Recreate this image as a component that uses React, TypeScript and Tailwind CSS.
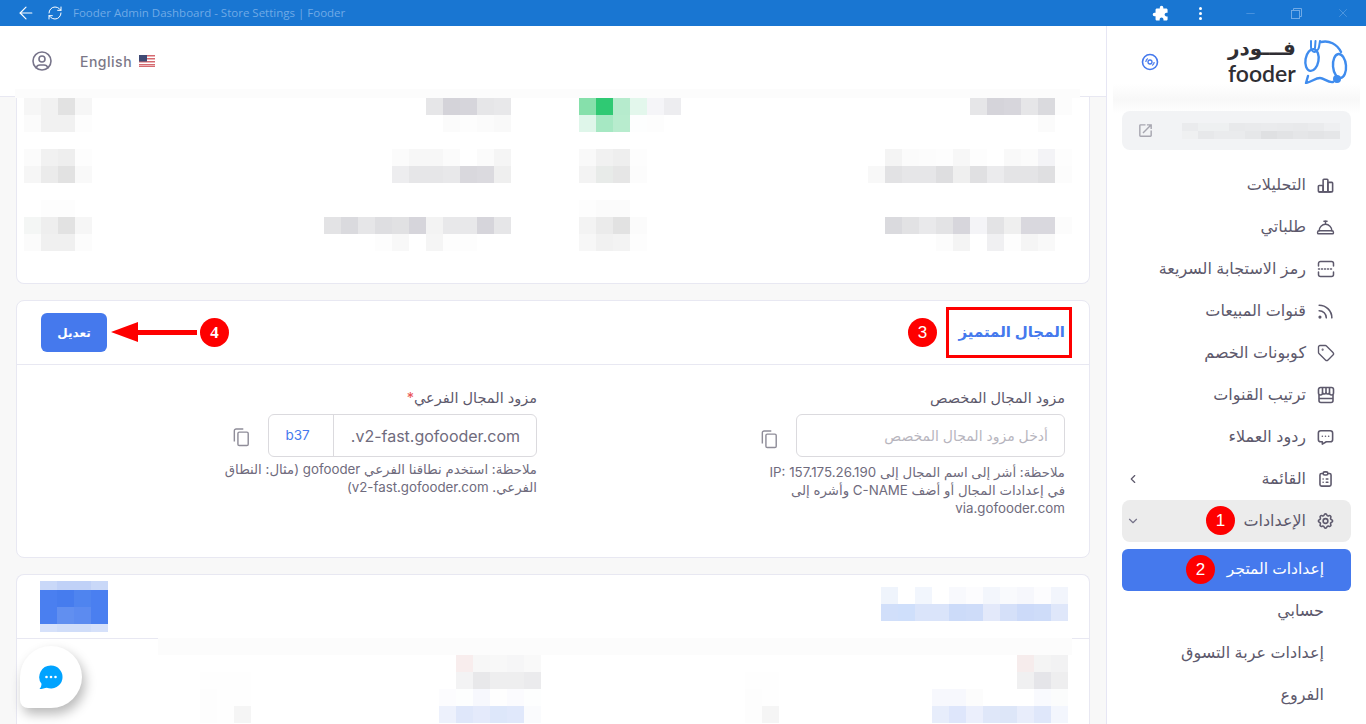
import { ArrowLeft, ConciergeBell, RefreshCw, Tag, X, Minus, ChevronLeft, ChevronDown } from "lucide-react";
import { MdExtension, MdOutlineOpenInNew } from "react-icons/md";
import { TbChartBar, TbClipboardList, TbMessageDots, TbRss, TbSettings, TbUserCircle } from "react-icons/tb";

type Cell = string | null;

// pixelated (redacted) blocks from the screenshot
function Mosaic({ rows, heights, cell = 17 }: { rows: Cell[][]; heights?: number[]; cell?: number }) {
  return (
    <div className="flex flex-col shrink-0">
      {rows.map((row, i) => (
        <div key={i} className="flex" style={{ height: heights ? heights[i] : 17 }}>
          {row.map((c, j) => (
            <div key={j} className="h-full" style={{ width: cell, backgroundColor: c ?? "transparent" }} />
          ))}
        </div>
      ))}
    </div>
  );
}

function Badge({ n, className }: { n: number; className: string }) {
  return (
    <div
      className={`absolute w-[29px] h-[29px] rounded-full bg-[#fe0000] text-white flex items-center justify-center text-[17px] font-['Liberation_Sans',sans-serif] ${className}`}
    >
      {n}
    </div>
  );
}

function QrIcon() {
  return (
    <svg width="18" height="18" viewBox="0 0 18 18" fill="none" stroke="currentColor" strokeWidth="1.5" strokeLinecap="round">
      <path d="M1.5 6V3.5a2 2 0 0 1 2-2h11a2 2 0 0 1 2 2V6" />
      <path d="M1.5 12v2.5a2 2 0 0 0 2 2h11a2 2 0 0 0 2-2V12" />
      <path d="M1.5 9h15" strokeDasharray="1 2" />
    </svg>
  );
}

function StoreIcon() {
  return (
    <svg width="18" height="18" viewBox="0 0 18 18" fill="none" stroke="currentColor" strokeWidth="1.6" strokeLinejoin="round">
      <path d="M3.5 1.5h11a2 2 0 0 1 2 2V7a2 2 0 0 1-4 0 2 2 0 0 1-3.500 0 2 2 0 0 1-3.500 0 2 2 0 0 1-4 0V3.500a2 2 0 0 1 2-2z" />
      <path d="M5.500 1.500V7M9 1.500V7M12.500 1.500V7" />
      <path d="M2 9v5.500a2 2 0 0 0 2 2h10a2 2 0 0 0 2-2V9M2 12.500h14" />
    </svg>
  );
}

function CopyIcon() {
  return (
    <svg width="17" height="19" viewBox="0 0 19 21" fill="none" stroke="#8f8d99" strokeWidth="1.6">
      <rect x="5.500" y="4.500" width="11.500" height="15" rx="1.500" />
      <path d="M1.500 15V3a2 2 0 0 1 2-2h8" />
    </svg>
  );
}

function UsFlag() {
  return (
    <svg width="16" height="12" viewBox="0 0 16 12">
      <rect width="16" height="12" fill="#fff" />
      <path d="M0 0h16v1.500H0zM0 3h16v1.500H0zM0 6h16v1.500H0zM0 9h16v1.500H0zM0 11h16v1H0z" fill="#d66a70" />
      <rect width="8" height="6.500" fill="#3f4a75" />
    </svg>
  );
}

function FooderLogo() {
  return (
    <svg width="46" height="48" viewBox="0 0 46 48" fill="none" stroke="#3f8cee" strokeWidth="2.400" strokeLinecap="round">
      <ellipse cx="9" cy="20" rx="6.500" ry="11" transform="rotate(10 9 20)" />
      <ellipse cx="36.500" cy="26" rx="6.500" ry="12" transform="rotate(-5 36.500 26)" />
      <path d="M8 1v6c0 3 2 5 3.500 5s4-2 4.500-5l1-6M12.500 1l-.5 7" strokeWidth="2" />
      <path d="M18 2c8-2 16 2 20 10" />
      <path d="M3 43l2-7M3 43c6-1 9-5 14-5 4 0 8 5 13 4" />
      <circle cx="34" cy="39" r="4" fill="#3f8cee" stroke="none" />
    </svg>
  );
}

const navItems = [
  { label: "التحليلات", icon: <TbChartBar size={19} /> },
  { label: "طلباتي", icon: <ConciergeBell size={19} strokeWidth={1.8} /> },
  { label: "رمز الاستجابة السريعة", icon: <QrIcon /> },
  { label: "قنوات المبيعات", icon: <TbRss size={19} /> },
  { label: "كوبونات الخصم", icon: <Tag size={18} strokeWidth={1.8} /> },
  { label: "ترتيب القنوات", icon: <StoreIcon /> },
  { label: "ردود العملاء", icon: <TbMessageDots size={20} /> },
];

const chatRow1 = [
  ["#f6f6f6", "#f1f1f1", "#e2e2e2", "#f6f6f6"],
  ["#fbfbfb", "#f1f1f1", "#f1f1f1", "#fdfdfd"],
];

function FieldNote({ children, className }: { children: React.ReactNode; className: string }) {
  return <p className={`text-[13.300px] leading-[18px] text-[#6f6b7d] ${className}`}>{children}</p>;
}

function NavLabel({ children }: { children: React.ReactNode }) {
  return <span className="-translate-y-px">{children}</span>;
}

export default function App() {
  return (
    <div className="w-[1366px] h-[724px] overflow-hidden flex flex-col bg-white [font-family:Inter,'DejaVu_Sans',sans-serif]">
      {/* window title bar */}
      <div className="h-[26px] shrink-0 bg-[#1976d2] flex items-center text-white">
        <ArrowLeft size={20} strokeWidth={1.4} className="ml-[16px]" />
        <RefreshCw size={16} strokeWidth={1.5} className="ml-[11px]" />
        <span className="ml-[10px] text-[11.500px] text-[#70aae6] font-['Open_Sans',sans-serif]">
          Fooder Admin Dashboard - Store Settings | Fooder
        </span>
        <MdExtension size={17} className="ml-auto -scale-x-100" />
        <div className="ml-[30px] flex flex-col gap-[2px]">
          <span className="w-[3px] h-[3px] rounded-full bg-white" />
          <span className="w-[3px] h-[3px] rounded-full bg-white" />
          <span className="w-[3px] h-[3px] rounded-full bg-white" />
        </div>
        <Minus size={13} strokeWidth={1} className="ml-[42px] text-[#70aae6]" />
        <svg width="11" height="11" viewBox="0 0 11 11" fill="none" stroke="#70aae6" className="ml-[34px]">
          <rect x="0.500" y="2.500" width="8" height="8" />
          <path d="M2.500 2.500V.5h8v8H8.500" />
        </svg>
        <X size={14} strokeWidth={1} className="ml-[34px] mr-[16px] text-[#70aae6]" />
      </div>

      <div className="flex-1 flex min-h-0">
        {/* main column */}
        <div className="relative flex-1 min-w-0 flex flex-col bg-[#f8f8f8] overflow-hidden">
          <header className="h-[71px] shrink-0 bg-white border-b border-[#e8e8f2] flex items-center pl-[30px] text-[#7b7888]">
            <TbUserCircle size={24} strokeWidth={1.6} className="text-[#77748a]" />
            <span className="ml-[26px] text-[14px] font-medium tracking-[0.5px]">English</span>
            <span className="ml-[7px]"><UsFlag /></span>
          </header>
          <div className="absolute left-[15px] top-[63px] w-[1065px] h-[9px] bg-[#fcfcfc]" />

          {/* first card, scrolled under the header */}
          <div className="mx-4 shrink-0 h-[187px] bg-white border border-t-0 border-[#e8e8f2] rounded-b-lg pl-[7px] pt-px grid grid-cols-[68px_419px_357px_204px] grid-rows-[51px_51px_51px] items-start">
            <Mosaic rows={chatRow1} />
            <div className="flex justify-end">
              <Mosaic rows={[["#e6e6e8", "#d4d3d9", "#d6d5db", "#e6e6e8", "#e8e8ea"], [null, "#fbfbfb", "#fdfdfd", "#fbfbfb", "#f9f9f9"]]} />
            </div>
            <div className="pl-[68px]">
              <Mosaic rows={[["#86e0ab", "#2fc973", "#b6ebcd", "#e3f7ec", "#f5f5f8", "#ededf0"], ["#dff6ea", "#a6e8c3", "#b8ecce", "#fdfefe", "#fdfdfd", null]]} />
            </div>
            <div className="flex justify-end">
              <Mosaic rows={[["#e6e6e8", "#d5d4da", "#d7d6dc", "#e6e6e8", "#dadade", "#fcfcfc"], [null, null, null, null, "#fbfbfb", null]]} />
            </div>

            <Mosaic rows={[["#fbfbfb", "#f1f1f1", "#eeeeee", "#fdfdfd"], ["#f6f6f6", "#ebebeb", "#e2e2e2", "#f9f9f9"]]} />
            <div className="flex justify-end">
              <Mosaic rows={[["#fbfbfb", "#f7f7f7", "#f7f7f7", "#fbfbfb", null, "#fbfbfb", "#f5f5f5"], ["#ededef", "#e6e6e8", "#e6e6e8", "#e8e8ea", "#d9d8dd", "#dbdadf", "#efefef"]]} />
            </div>
            <div className="pl-[68px]">
              <Mosaic rows={[["#f9f9f9", "#f1f1f1", "#eeeeee", "#fdfdfd"], ["#f3f3f3", "#e8ebe9", "#e6e6e6", "#fcfcfc"]]} />
            </div>
            <div className="flex justify-end">
              <Mosaic rows={[[null, "#f4f4f4", "#fbfbfb", "#fcfcfc", "#fdfdfd", "#f7f7f7", "#fdfdfd", null, "#f9f9f9", "#fbfbfb", "#f3f3f6", "#fdfdfd"], ["#f8f8f8", "#e2e2e4", "#e6e6e8", "#e6e6e8", "#dedee0", "#efefef", "#e0e0e2", "#ebebed", "#e4e4e6", "#e4e4e6", "#dfdfe1", "#fcfcfc"]]} />
            </div>

            <Mosaic rows={[[null, "#fdfdfd", "#fdfdfd", null], ["#f4f6f5", "#eeeeee", "#e2e2e2", "#f6f6f6"], ["#fbfbfb", "#f0f0f0", "#f0f0f0", "#fcfcfc"]]} />
            <div className="flex justify-end">
              <Mosaic rows={[[null], ["#e3e3e5", "#dadade", "#e6e6e8", "#dedee1", "#e1e1e3", "#d6d5db", "#f3f3f3", "#e8e8ea", "#e8e8ea", "#d6d5db", "#e6e6e8"], [null, null, null, "#fdfdfd", "#f8f8f8", null, "#f5f5f5", "#fdfdfd", "#fdfdfd", null, null]]} />
            </div>
            <div className="pl-[68px]">
              <Mosaic rows={[["#fdfdfd", "#fbfbfb", "#fbfbfb"], ["#f3f3f3", "#ebebeb", "#e2e2e2", "#fbfbfb"], ["#f7f7f7", "#f1f1f1", "#f3f3f3", "#fdfdfd"]]} />
            </div>
            <div className="flex justify-end">
              <Mosaic rows={[[null], ["#dadade", "#e2e2e4", "#e9e9eb", "#e3e3e5", "#d7d6dc", "#f4f4f7", "#e3e3e5", "#efefef", "#d9d8de", "#d9d8de", "#fcfcfc"], [null, null, null, "#fcfcfc", "#f4f4f4", null, "#f0f0f2", "#fdfdfd", "#f5f5f5", "#f9f9f9", null]]} />
            </div>
          </div>

          {/* premium domain card */}
          <section dir="rtl" className="relative mx-4 mt-4 shrink-0 h-[258px] bg-white border border-[#e8e8f2] rounded-lg">
            <div className="h-[64px] border-b border-[#e8e8f2] flex items-center justify-between pl-[24px] pr-[24px]">
              <h2 className="text-[15px] font-semibold text-[#4579ed]">المجال المتميز</h2>
              <button className="w-[66px] h-[39px] rounded-md bg-[#4579ed] text-white text-[12px] font-semibold">تعديل</button>
            </div>
            <div className="grid grid-cols-[528px_496px] pr-[24px] pl-[24px] pt-[24px] text-[#5d596c]">
              <div>
                <label className="block text-[14.500px] leading-[18px] mb-[7px]">مزود المجال المخصص</label>
                <div className="flex items-center">
                  <div className="w-[269px] h-[43px] border border-[#dbdade] rounded-md flex items-center px-4 text-[14px] text-[#b7b5be]">
                    أدخل مزود المجال المخصص
                  </div>
                  <span className="mr-[18px] mt-[7px]"><CopyIcon /></span>
                </div>
                <FieldNote className="mt-[6px] w-[305px]">
                  ملاحظة: أشر إلى اسم المجال إلى IP: 157.175.26.190 في إعدادات المجال أو أضف C-NAME وأشره إلى via.gofooder.com
                </FieldNote>
              </div>
              <div>
                <label className="block text-[14.500px] leading-[18px] mb-[7px]">
                  مزود المجال الفرعي<span className="text-[#ea5455]">*</span>
                </label>
                <div className="flex items-center">
                  <div className="w-[269px] h-[43px] border border-[#dbdade] rounded-md flex items-center text-[16px]">
                    <span className="flex-1 pr-[16px] whitespace-nowrap text-[#6f6b7d]">v2-fast.gofooder.com.</span>
                    <span className="w-[65px] shrink-0 h-full border-r border-[#dbdade] flex items-center justify-center pr-[7px] text-[13.500px] text-[#4579ed]">b37</span>
                  </div>
                  <span className="mr-[18px] mt-[4px]"><CopyIcon /></span>
                </div>
                <FieldNote className="mt-[3px] w-[315px]">
                  ملاحظة: استخدم نطاقنا الفرعي gofooder (مثال: النطاق الفرعي. v2-fast.gofooder.com)
                </FieldNote>
              </div>
            </div>
          </section>

          {/* third card, mostly blurred */}
          <section className="relative mx-4 mt-4 flex-1 bg-white border border-b-0 border-[#e8e8f2] rounded-t-lg">
            <div className="h-[64px] border-b border-[#e8e8f2] flex justify-between pl-[23px] pr-[21px]">
              <div className="mt-[6px]">
                <Mosaic
                  heights={[9, 17, 17, 8]}
                  rows={[
                    ["#c9d8f8", "#c0d1f7", "#c0d1f7", "#c9d8f8"],
                    ["#4a7ff0", "#467cee", "#4f84ef", "#4a7ff0"],
                    ["#4a7ff0", "#618ff0", "#5c8bf0", "#4a7ff0"],
                    ["#d6e1fa", "#d0ddf9", "#d0ddf9", "#d6e1fa"],
                  ]}
                />
              </div>
              <div className="mt-[12px]">
                <Mosaic
                  rows={[
                    ["#eff4fc", null, "#f2f6fd", null, "#f8f9fd", "#fcfcfe", "#f3f6fc", "#f9fafd", "#f6f7fc", "#fcfcfe", "#f2f5fc"],
                    ["#d1dffa", "#cfdffb", "#dae4fa", "#dae4fa", "#ccdbf9", "#cedcf9", "#e3e9fa", "#d5e0f9", "#ccdaf9", "#cedcf9", "#dfe7fa"],
                  ]}
                />
              </div>
            </div>
            <div className="absolute left-[141px] right-[17px] top-[63px] h-[17px] bg-[#fcfcfc]" />
            <div className="mt-[16px] flex items-start pl-[183px] pr-[21px]">
              <Mosaic
                rows={[
                  [null, null, null],
                  ["#fefefe", "#fefefe", "#fefefe"],
                  ["#fdfdfd", "#fefefe", "#fefefe"],
                  ["#fdfdfd", "#fefefe", "#f5f5f5"],
                ]}
              />
              <div className="ml-[188px]">
                <Mosaic
                  rows={[
                    [null, "#f8eded", "#f7f7f7", "#f8f8f8", "#f6f6f7", "#f9f9f9"],
                    [null, "#f3f3f4", "#e8e8ea", "#eeeeef", "#eeeeef", "#ebebed"],
                    ["#fcfcfe", "#fdfefe", "#f7f8fd", "#fefefe", "#fbfbfe", "#fdfefe"],
                    ["#edf1fc", "#dfe7fa", "#e4eafb", "#dde7fa", "#e0e8fb", "#fafbfd"],
                  ]}
                />
              </div>
              <div className="ml-[204px]">
                <Mosaic
                  rows={[
                    [null, null],
                    ["#fefefe", "#fefefe"],
                    ["#fdfdfd", "#fefefe"],
                    ["#fdfdfd", "#f5f5f5"],
                  ]}
                />
              </div>
              <div className="ml-auto">
                <Mosaic
                  rows={[
                    [null, null, null, null, null, "#f6ecec", "#f4f4f4", "#f2f2f3"],
                    [null, null, null, null, null, "#f0f0f1", "#e5e5e9", "#eeeeef"],
                    ["#f7f8fd", "#f7f8fd", "#fcfcfc", null, null, null, "#f9fafe", "#fbfcfc"],
                    ["#e7edfb", "#dee6fb", "#ebeffc", "#dfe7f9", "#dde6f8", "#e8edfb", "#dfe7fa", "#f3f6fd"],
                  ]}
                />
              </div>
            </div>
          </section>

          {/* floating chat button */}
          <div className="absolute left-[20px] top-[620px] w-[62px] h-[62px] bg-white rounded-[31px] rounded-bl-lg shadow-[3px_6px_12px_rgba(0,0,0,0.28)] flex items-center justify-center">
            <svg width="24" height="24" viewBox="0 0 24 24">
              <path d="M12 .5a11.500 11.500 0 1 1-4.200 22.200C6 23 3 24 .5 24c1.500-1.500 2-3.500 2-5.200A11.500 11.500 0 0 1 12 .5z" fill="#00a3ff" />
              <circle cx="7.500" cy="12" r="1.300" fill="#fff" />
              <circle cx="12" cy="12" r="1.300" fill="#fff" />
              <circle cx="16.500" cy="12" r="1.300" fill="#fff" />
            </svg>
          </div>

          {/* annotations */}
          <div className="absolute left-[946px] top-[281px] w-[126px] h-[51px] border-[3px] border-[#fe0000]" />
          <Badge n={3} className="left-[908px] top-[292px]" />
          <Badge n={4} className="left-[200px] top-[292px] font-bold font-['Liberation_Serif',serif]" />
          <div className="absolute left-[111px] top-[296px] flex items-center">
            <div className="w-0 h-0 border-y-[10px] border-y-transparent border-r-[27px] border-r-[#fe0000]" />
            <div className="w-[59px] h-[5px] bg-[#fe0000]" />
          </div>
        </div>

        {/* sidebar */}
        <aside dir="rtl" className="relative w-[260px] shrink-0 bg-white border-l border-[#e6e6f4] flex flex-col text-[#5d596c]">
          <div className="h-[85px] shrink-0 relative">
            <div className="absolute right-[17px] top-[14px]"><FooderLogo /></div>
            <div className="absolute left-[121px] top-[9px] text-[20px] leading-[26px] text-[#2f2e33] font-semibold w-[68px] flex justify-center whitespace-nowrap">فـــودر</div>
            <div className="absolute left-[121px] top-[37px] h-[20px] text-[23px] leading-[20px] text-[#2f2e33] font-semibold font-['Lato',sans-serif]" dir="ltr">fooder</div>
            <svg className="absolute left-[34px] top-[27px]" width="18" height="18" viewBox="0 0 18 18" fill="none" stroke="#4579ed">
              <circle cx="9" cy="9" r="7.500" strokeWidth="1.600" />
              <circle cx="9" cy="9" r="2" strokeWidth="1.300" />
              <path d="M4.800 9a4.200 4.200 0 0 1 2-3.500M13.200 9a4.200 4.200 0 0 1-2 3.500" strokeWidth="1.200" />
            </svg>
          </div>
          <div className="absolute inset-x-[6px] top-[58px] h-[30px] bg-gradient-to-b from-white via-[#f8f8f8] to-white" />

          <div className="relative mx-[15px] h-[39px] shrink-0 bg-[#f2f3f5] rounded-lg flex items-center pr-[11px]">
            <Mosaic
              cell={15.8}
              heights={[8, 8]}
              rows={[
                ["#eeeff1", "#eaebed", "#e8e9eb", "#e9eaec", "#eaebed", "#e9eaec", "#e8e9eb", "#eef0f1", "#eef0f1", "#eaebed"],
                ["#e5e6e8", "#e3e4e6", "#e5e6e8", "#e2e3e5", "#dfe0e2", "#e6e7e9", "#eaebed", "#eaebed", "#e7e8ea", "#eff0f1"],
              ]}
            />
            <MdOutlineOpenInNew size={17} className="mr-auto ml-[15px] text-[#a7a6b0]" />
          </div>

          <nav className="mt-[14px] flex flex-col">
            {navItems.map((item) => (
              <div key={item.label} className="h-[42px] mx-[15px] flex items-center pr-[16px] gap-[10px] text-[16px]">
                <span className="w-[19px] flex justify-center">{item.icon}</span>
                <NavLabel>{item.label}</NavLabel>
              </div>
            ))}
            <div className="h-[42px] mx-[15px] flex items-center pr-[16px] gap-[10px] text-[16px]">
              <span className="w-[19px] flex justify-center"><TbClipboardList size={20} /></span>
              <NavLabel>القائمة</NavLabel>
              <ChevronLeft size={14} className="mr-auto ml-[4px]" />
            </div>
            <div className="relative h-[42px] mx-[15px] bg-[#ececec] rounded-lg flex items-center pr-[16px] gap-[10px] text-[16px]">
              <span className="w-[19px] flex justify-center"><TbSettings size={20} /></span>
              <NavLabel>الإعدادات</NavLabel>
              <ChevronDown size={14} className="mr-auto ml-[4px] text-[#77748a]" />
              <Badge n={1} className="left-[84px] top-[6px]" />
            </div>
            <div className="relative h-[42px] mt-[7px] mx-[15px] bg-[#4579ed] rounded-md flex items-center pr-[27px] text-[15.500px] font-medium text-white">
              <NavLabel>إعدادات المتجر</NavLabel>
              <Badge n={2} className="left-[64px] top-[6px]" />
            </div>
            <div className="h-[42px] -mt-px mx-[15px] flex items-center pr-[27px] text-[16px]"><NavLabel>حسابي</NavLabel></div>
            <div className="h-[42px] mx-[15px] flex items-center pr-[27px] text-[16px]"><NavLabel>إعدادات عربة التسوق</NavLabel></div>
            <div className="h-[42px] mx-[15px] flex items-center pr-[27px] text-[16px]"><NavLabel>الفروع</NavLabel></div>
          </nav>
        </aside>
      </div>
    </div>
  );
}
